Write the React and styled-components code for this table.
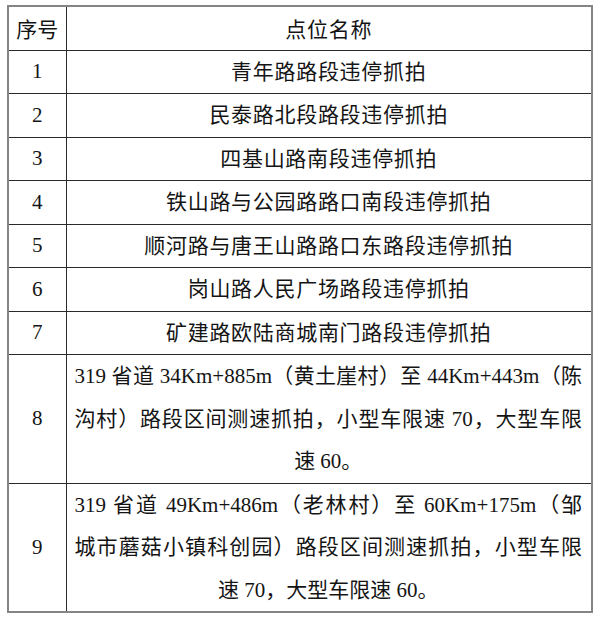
import React from "react";
import styled, { createGlobalStyle } from "styled-components";

const rows = [
  { no: "1", lines: ["青年路路段违停抓拍"] },
  { no: "2", lines: ["民泰路北段路段违停抓拍"] },
  { no: "3", lines: ["四基山路南段违停抓拍"] },
  { no: "4", lines: ["铁山路与公园路路口南段违停抓拍"] },
  { no: "5", lines: ["顺河路与唐王山路路口东路段违停抓拍"] },
  { no: "6", lines: ["岗山路人民广场路段违停抓拍"] },
  { no: "7", lines: ["矿建路欧陆商城南门路段违停抓拍"] },
  {
    no: "8",
    lines: [
      "319 省道 34Km+885m（黄土崖村）至 44Km+443m（陈",
      "沟村）路段区间测速抓拍，小型车限速 70，大型车限",
      "速 60。",
    ],
  },
  {
    no: "9",
    lines: [
      "319 省道 49Km+486m（老林村）至 60Km+175m（邹",
      "城市蘑菇小镇科创园）路段区间测速抓拍，小型车限",
      "速 70，大型车限速 60。",
    ],
  },
];

const App = () => {
  return (
    <>
      <GlobalStyle />
      <Page>
        <Table>
          <colgroup>
            <col style={{ width: "58px" }} />
            <col />
          </colgroup>
          <thead>
            <tr>
              <HeadCell $h={44}>序号</HeadCell>
              <HeadCell $h={44} $spaced>
                点位名称
              </HeadCell>
            </tr>
          </thead>
          <tbody>
            {rows.map((row) => {
              const multi = row.lines.length > 1;
              return (
                <tr key={row.no}>
                  <NoCell $h={multi ? 128 : 42}>{row.no}</NoCell>
                  <NameCell $h={multi ? 128 : 42} $multi={multi}>
                    {row.lines.map((line, i) => (
                      <Line
                        key={i}
                        $justify={multi && i < row.lines.length - 1}
                        $spaced={!multi}
                      >
                        {line}
                      </Line>
                    ))}
                  </NameCell>
                </tr>
              );
            })}
          </tbody>
        </Table>
      </Page>
    </>
  );
};

export default App;

const GlobalStyle = createGlobalStyle`
  html, body {
    margin: 0;
    padding: 0;
    background: #ffffff;
  }
  body {
    font-family: "Liberation Serif", "Noto Sans CJK SC", serif;
    color: #141414;
  }
`;

const Page = styled.div`
  width: 600px;
  height: 619px;
  padding: 5px 0 0 7px;
  box-sizing: border-box;
`;

const Table = styled.table`
  width: 586px;
  table-layout: fixed;
  border-collapse: collapse;
  border: 2px solid #858585;
  font-size: 21px;
`;

const Cell = styled.td`
  height: ${(props) => props.$h}px;
  padding: 0;
  border: 1px solid #2a2a2a;
  text-align: center;
  vertical-align: middle;
  box-sizing: border-box;
  letter-spacing: ${(props) => (props.$spaced ? "0.7px" : "0")};
`;

const HeadCell = styled(Cell).attrs({ as: "th" })`
  font-weight: 400;
`;

const NoCell = styled(Cell)``;

const NameCell = styled(Cell)`
  padding: ${(props) => (props.$multi ? "0 9px 0 8px" : "0")};
`;

const Line = styled.div`
  line-height: 42.5px;
  white-space: nowrap;
  letter-spacing: ${(props) => (props.$spaced ? "0.7px" : "0")};
  text-align: ${(props) => (props.$justify ? "justify" : "center")};
  text-align-last: ${(props) => (props.$justify ? "justify" : "center")};
`;
